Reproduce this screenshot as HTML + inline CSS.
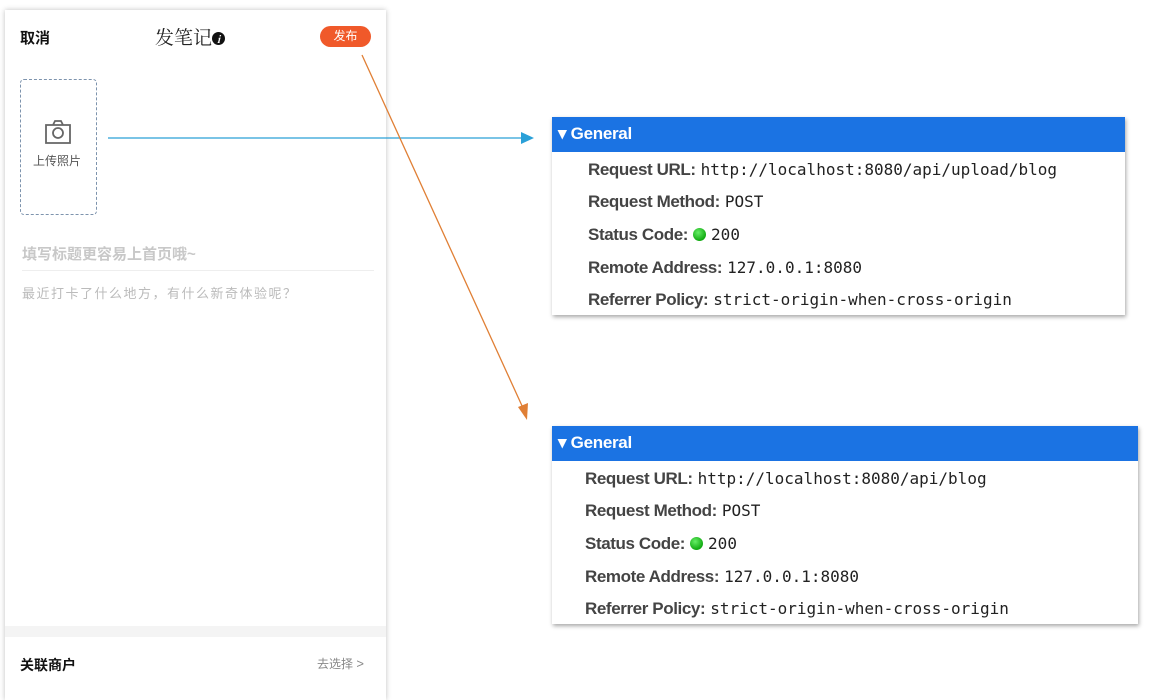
<!DOCTYPE html>
<html><head><meta charset="utf-8"><style>
body{margin:0;width:1151px;height:691px;background:#fff;position:relative;overflow:hidden;font-family:"Liberation Sans","Noto Sans CJK SC",sans-serif}
.phone{position:absolute;left:5px;top:10px;width:381px;height:690px;background:#fff;box-shadow:0 0 5px rgba(0,0,0,.25)}
.a{position:absolute}
.panel{position:absolute;background:#fff;box-shadow:1px 2px 4px rgba(0,0,0,.35)}
.hd{background:#1b73e3;color:#fff;font-weight:bold;font-size:17px;height:35px;line-height:33px;padding-left:6px;letter-spacing:-.3px}
.row{position:absolute;left:36px;font-size:17px;color:#333;white-space:nowrap}
.row b{color:#444;font-weight:bold;letter-spacing:-.4px;margin-right:5px}
.row span{font-family:"DejaVu Sans Mono",monospace;font-size:16px;color:#222}
.dot{display:inline-block;width:13px;height:13px;border-radius:50%;background:radial-gradient(circle at 40% 35%,#6e6,#1a1 70%);vertical-align:-1px;margin-right:5px}
</style></head><body>
<div class="phone">
 <div class="a" style="left:15px;top:17px;font-size:15px;font-weight:bold;color:#111">取消</div>
 <div class="a" style="left:150px;top:13px;font-size:19px;color:#222;font-family:'Noto Serif CJK SC',serif">发笔记<span style="display:inline-block;width:13px;height:13px;border-radius:50%;background:#111;color:#fff;font-size:10px;line-height:13px;text-align:center;font-style:italic;font-weight:bold;vertical-align:1px">i</span></div>
 <div class="a" style="left:315px;top:16px;width:51px;height:21px;border-radius:11px;background:#f0592a;color:#fff;font-size:12px;line-height:21px;text-align:center">发布</div>
 <div class="a" style="left:15px;top:69px;width:75px;height:134px;border:1px dashed #7d93ad;border-radius:4px"></div>
 <svg class="a" style="left:38px;top:108px" width="30" height="28" viewBox="0 0 30 28"><path d="M3 7h24v18H3z M10 7l2-4h6l2 4" fill="none" stroke="#666" stroke-width="1.8"/><circle cx="15" cy="15" r="5" fill="none" stroke="#666" stroke-width="1.8"/></svg>
 <div class="a" style="left:28px;top:142px;font-size:12px;color:#555">上传照片</div>
 <div class="a" style="left:17px;top:233px;font-size:15px;font-weight:bold;color:#c8c8c8">填写标题更容易上首页哦~</div>
 <div class="a" style="left:17px;top:260px;width:352px;height:1px;background:#eee"></div>
 <div class="a" style="left:17px;top:273px;font-size:13px;color:#bbb;letter-spacing:1.5px">最近打卡了什么地方，有什么新奇体验呢？</div>
 <div class="a" style="left:0;top:616px;width:381px;height:11px;background:#f4f4f4"></div>
 <div class="a" style="left:15px;top:645px;font-size:14px;font-weight:bold;color:#111">关联商户</div>
 <div class="a" style="left:312px;top:645px;font-size:12px;color:#888">去选择 <span style="font-size:13px">&gt;</span></div>
</div>
<svg class="a" style="left:0;top:0" width="1151" height="691">
 <line x1="108" y1="138" x2="524" y2="138" stroke="#2aa0d8" stroke-width="1.3"/>
 <path d="M534 138 L521 132 L521 144 Z" fill="#2aa0d8"/>
 <line x1="362" y1="55" x2="523" y2="408" stroke="#e07f35" stroke-width="1.3"/>
 <path d="M527 420 L518 407 L528 403 Z" fill="#e07f35"/>
</svg>
<div class="panel" style="left:552px;top:117px;width:573px;height:198px">
 <div class="hd">▾ General</div>
 <div class="row" style="top:43px"><b>Request URL:</b><span>http://localhost:8080/api/upload/blog</span></div>
 <div class="row" style="top:75px"><b>Request Method:</b><span>POST</span></div>
 <div class="row" style="top:108px"><b>Status Code:</b><i class="dot"></i><span>200</span></div>
 <div class="row" style="top:141px"><b>Remote Address:</b><span>127.0.0.1:8080</span></div>
 <div class="row" style="top:173px"><b>Referrer Policy:</b><span>strict-origin-when-cross-origin</span></div>
</div>
<div class="panel" style="left:552px;top:426px;width:586px;height:198px">
 <div class="hd">▾ General</div>
 <div class="row" style="top:43px;left:33px"><b>Request URL:</b><span>http://localhost:8080/api/blog</span></div>
 <div class="row" style="top:75px;left:33px"><b>Request Method:</b><span>POST</span></div>
 <div class="row" style="top:108px;left:33px"><b>Status Code:</b><i class="dot"></i><span>200</span></div>
 <div class="row" style="top:141px;left:33px"><b>Remote Address:</b><span>127.0.0.1:8080</span></div>
 <div class="row" style="top:173px;left:33px"><b>Referrer Policy:</b><span>strict-origin-when-cross-origin</span></div>
</div>
</body></html>
